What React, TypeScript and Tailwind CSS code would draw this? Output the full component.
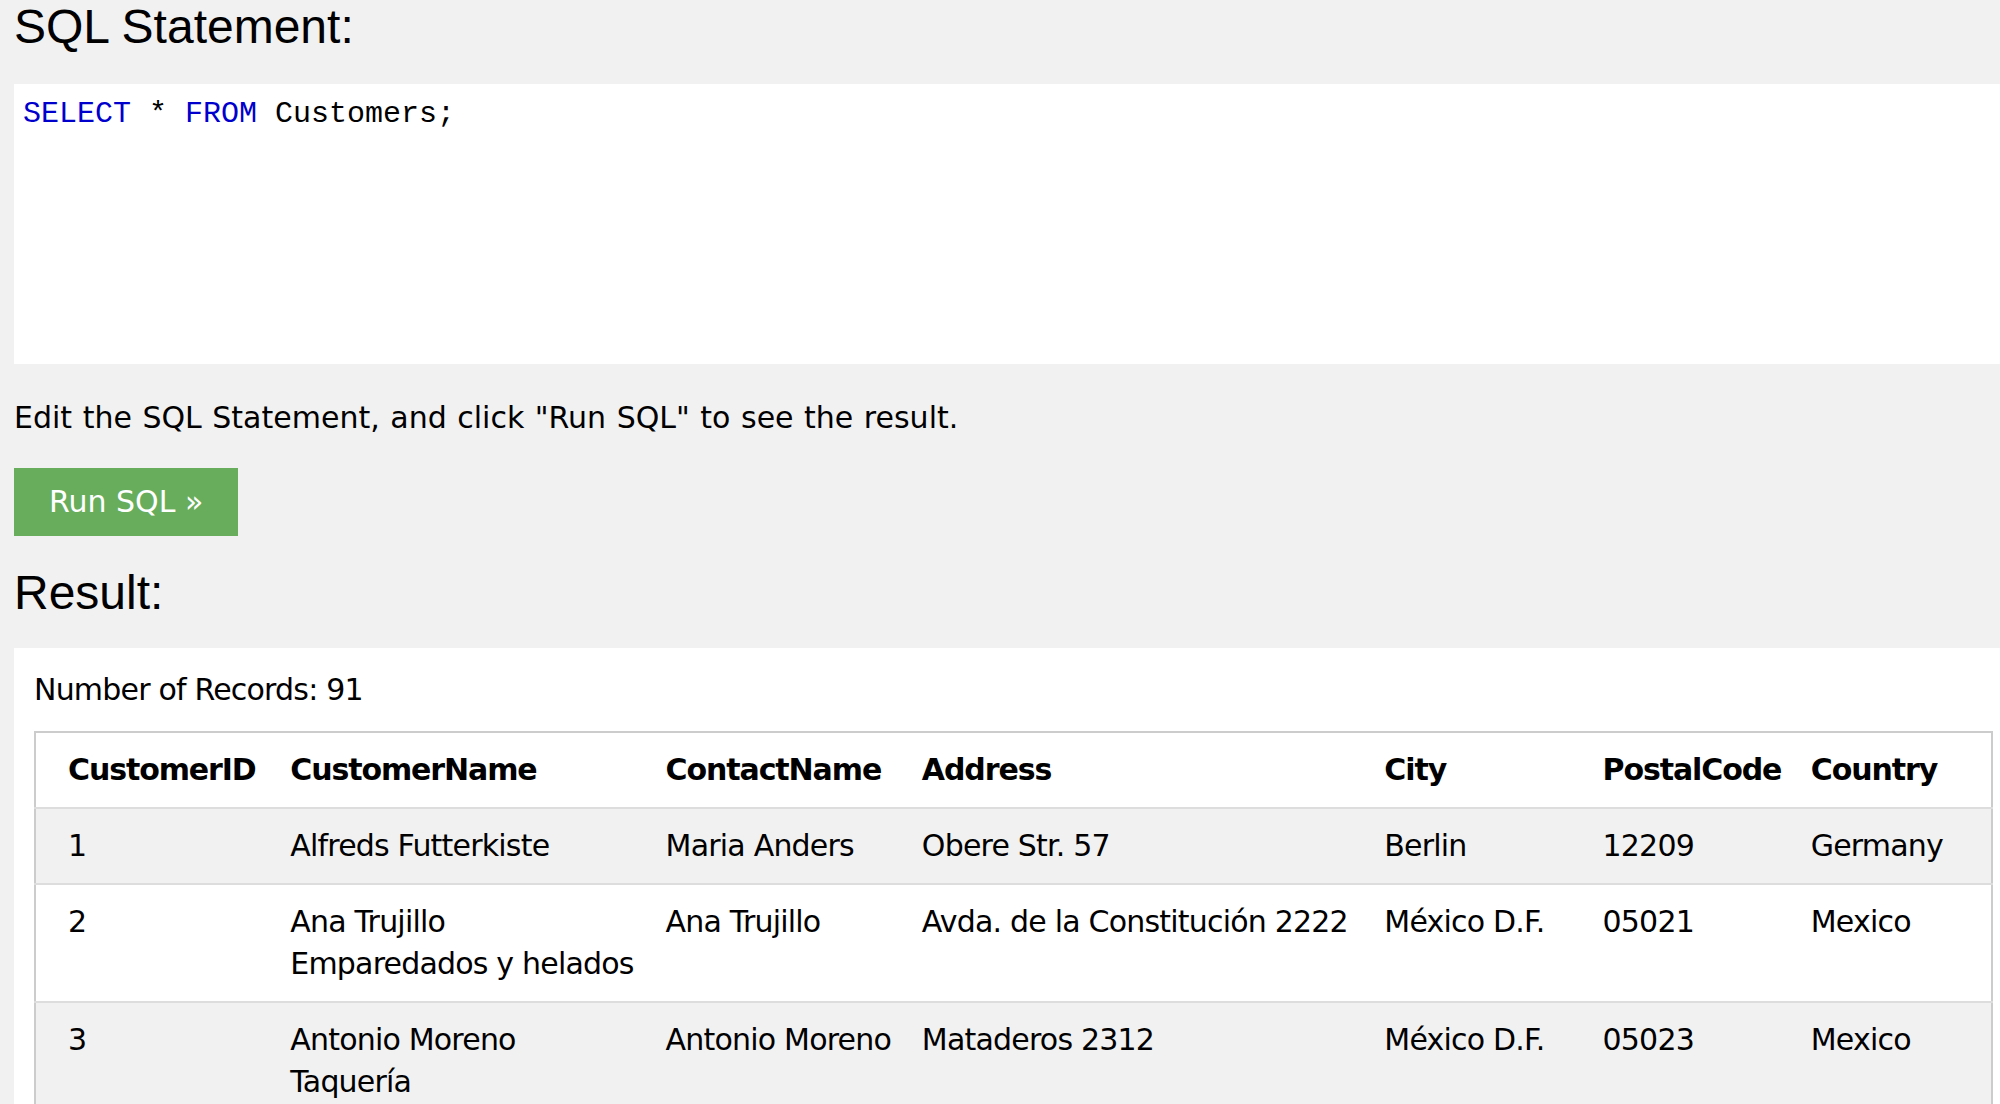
const rows = [
  { id: '1', name: ['Alfreds Futterkiste'], contact: 'Maria Anders', address: 'Obere Str. 57', city: 'Berlin', postal: '12209', country: 'Germany' },
  { id: '2', name: ['Ana Trujillo', 'Emparedados y helados'], contact: 'Ana Trujillo', address: 'Avda. de la Constitución 2222', city: 'México D.F.', postal: '05021', country: 'Mexico' },
  { id: '3', name: ['Antonio Moreno', 'Taquería'], contact: 'Antonio Moreno', address: 'Mataderos 2312', city: 'México D.F.', postal: '05023', country: 'Mexico' },
];

const headers = ['CustomerID', 'CustomerName', 'ContactName', 'Address', 'City', 'PostalCode', 'Country'];
const widths = ['w-[239px]', 'w-[375px]', 'w-[256px]', 'w-[462px]', 'w-[218px]', 'w-[208px]', 'w-[197px]'];

export default function App() {
  return (
    <div className="min-h-screen bg-[#f1f1f1] pl-[14px] overflow-hidden text-black">
      {/* SQL editor */}
      <h2 className="font-['Liberation_Sans',Arial,sans-serif] text-[48px] leading-[54px] font-normal">
        SQL Statement:
      </h2>
      <div className="mt-[30px] h-[280px] bg-white pl-[9px] pt-[13px] font-['Liberation_Mono','Courier_New',monospace] text-[30px] leading-[34px] whitespace-pre">
        <span className="text-[#0000cd]">SELECT</span> * <span className="text-[#0000cd]">FROM</span> Customers;
      </div>

      <div className="font-['DejaVu_Sans',Verdana,sans-serif] text-[30px] leading-[42px]">
        <p className="mt-[33px] [word-spacing:1px]">Edit the SQL Statement, and click "Run SQL" to see the result.</p>
        <button className="mt-[29px] block bg-[#67ad5c] text-white px-[35px] py-4 leading-[36px]">
          Run SQL »
        </button>
      </div>

      <h2 className="mt-[30px] font-['Liberation_Sans',Arial,sans-serif] text-[48px] leading-[54px] font-normal">
        Result:
      </h2>

      {/* Result panel */}
      <div className="mt-[28px] bg-white pl-[20px] pt-[21px] pb-10 font-['DejaVu_Sans',Verdana,sans-serif] text-[30px] leading-[42px] tracking-[-0.8px]">
        <div>Number of Records: 91</div>
        <table className="mt-[20px] w-[1959px] table-fixed border-collapse border-2 border-[#cccccc]">
          <colgroup>
            {widths.map((w, i) => (
              <col key={i} className={w} />
            ))}
          </colgroup>
          <thead>
            <tr className="border-b-2 border-[#dddddd] bg-white">
              {headers.map((h, i) => (
                <th key={h} className={`text-left align-top font-bold tracking-[-1.1px] py-4 pr-2 whitespace-nowrap ${i === 0 ? 'pl-8' : 'pl-4'}`}>
                  {h}
                </th>
              ))}
            </tr>
          </thead>
          <tbody>
            {rows.map((r, idx) => (
              <tr key={r.id} className={`border-b-2 border-[#dddddd] ${idx % 2 === 0 ? 'bg-[#f1f1f1]' : 'bg-white'}`}>
                <td className="align-top py-4 pl-8 pr-4">{r.id}</td>
                <td className="align-top py-4 pl-4 pr-1 whitespace-nowrap">
                  {r.name.map((line) => (
                    <div key={line}>{line}</div>
                  ))}
                </td>
                <td className="align-top py-4 pl-4 pr-2 whitespace-nowrap">{r.contact}</td>
                <td className="align-top py-4 pl-4 pr-2 whitespace-nowrap">{r.address}</td>
                <td className="align-top py-4 pl-4 pr-2 whitespace-nowrap">{r.city}</td>
                <td className="align-top py-4 pl-4 pr-2 whitespace-nowrap">{r.postal}</td>
                <td className="align-top py-4 pl-4 pr-2 whitespace-nowrap">{r.country}</td>
              </tr>
            ))}
          </tbody>
        </table>
      </div>
    </div>
  );
}
